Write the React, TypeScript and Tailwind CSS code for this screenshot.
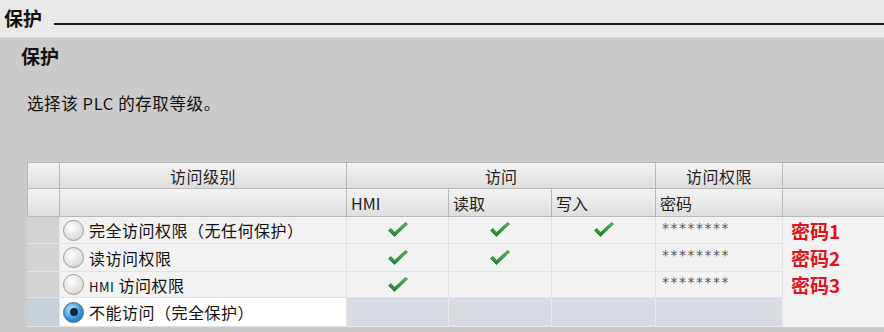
const font = { fontFamily: '"Noto Sans CJK SC", "Noto Sans", sans-serif' };

function Check() {
  return (
    <svg width="22" height="18" viewBox="0 0 22 18">
      <defs>
        <linearGradient id="g" x1="0" y1="0" x2="0" y2="1">
          <stop offset="0" stopColor="#5cc05a" />
          <stop offset="1" stopColor="#17802a" />
        </linearGradient>
      </defs>
      <path
        d="M1.5 9.5 L7.5 15.5 L20.5 3 L18.5 1.5 L7.6 11.5 L4 7.5 Z"
        fill="url(#g)"
        stroke="#1a6e25"
        strokeWidth="0.7"
        strokeLinejoin="round"
      />
    </svg>
  );
}

function Radio({ checked }: { checked?: boolean }) {
  if (checked) {
    return (
      <span className="flex h-[21px] w-[21px] shrink-0 items-center justify-center rounded-full border border-[#3b6f9a] bg-[radial-gradient(circle_at_40%_35%,#c6e8fb,#2f8fd0_60%,#1b5f93)]">
        <span className="h-[8px] w-[8px] rounded-full bg-[#0b2a44]" />
      </span>
    );
  }
  return (
    <span className="h-[21px] w-[21px] shrink-0 rounded-full border border-[#9a9a9a] bg-[radial-gradient(circle_at_40%_35%,#ffffff,#dcdcdc_70%,#bdbdbd)]" />
  );
}

const rows = [
  { label: "完全访问权限（无任何保护）", hmi: true, read: true, write: true, note: "密码1" },
  { label: "读访问权限", hmi: true, read: true, write: false, note: "密码2" },
  { label: "HMI 访问权限", hmi: true, read: false, write: false, note: "密码3" },
];

export default function App() {
  const head = "bg-[linear-gradient(#f3f3f3,#dedede)] border-r border-b border-[#b8b8b8] text-[16px] text-[#222]";
  const cell = "border-r border-b border-[#e2e2e2] bg-[#f2f2f2] flex items-center justify-center";
  return (
    <div className="h-[332px] w-[884px] overflow-hidden bg-[#cbcbcb]" style={font}>
      <div className="flex h-[38px] items-center gap-[12px] border-b border-[#dadada] bg-[#e9e9e9] pl-[4px]">
        <span className="text-[19px] font-bold text-[#111]">保护</span>
        <div className="mt-[10px] h-[2px] flex-1 bg-[#1a1a1a]" />
      </div>
      <div className="pl-[21px] pt-[4px] text-[19px] font-bold text-[#111]">保护</div>
      <div className="pl-[27px] pt-[20px] text-[16.5px] tracking-[0.6px] text-[#111]">选择该 PLC 的存取等级。</div>

      <div className="ml-[27px] mt-[47px] grid grid-cols-[33px_287px_102px_103px_104px_127px_1fr] grid-rows-[26px_28px_27px_28px_26px_29px] border-t border-[#b8b8b8]">
        <div className={`${head} border-l`} />
        <div className={`${head} flex items-center justify-center tracking-[0.5px]`}>访问级别</div>
        <div className={`${head} col-span-3 flex items-center justify-center`}>访问</div>
        <div className={`${head} flex items-center justify-center tracking-[0.5px]`}>访问权限</div>
        <div className="border-b border-[#b8b8b8] bg-[linear-gradient(#f0f0f0,#dcdcdc)]" />

        <div className={`${head} border-l`} />
        <div className={head} />
        <div className={`${head} flex items-center pl-[4px] text-[14px]`}>HMI</div>
        <div className={`${head} flex items-center pl-[4px]`}>读取</div>
        <div className={`${head} flex items-center pl-[4px]`}>写入</div>
        <div className={`${head} flex items-center pl-[4px]`}>密码</div>
        <div className="border-b border-[#b8b8b8] bg-[linear-gradient(#f0f0f0,#dcdcdc)]" />

        {rows.map((r) => (
          <div key={r.note} className="contents">
            <div className="border-b border-r border-[#e4e4e4] bg-[#d3d3d3]" />
            <div className="flex items-center gap-[5px] border-b border-r border-[#e2e2e2] bg-[#f2f2f2] pl-[3px] text-[16px] tracking-[0.5px] text-[#111]">
              <Radio />
              {r.label.startsWith("HMI") ? (
                <span>
                  <span className="text-[13px]">HMI</span> 访问权限
                </span>
              ) : (
                <span>{r.label}</span>
              )}
            </div>
            <div className={cell}>{r.hmi && <Check />}</div>
            <div className={cell}>{r.read && <Check />}</div>
            <div className={cell}>{r.write && <Check />}</div>
            <div className="flex items-center border-b border-r border-[#e2e2e2] bg-[#f2f2f2] pb-[4px] pl-[6px] text-[14px] tracking-[1.5px] text-[#555]" style={{ fontFamily: '"DejaVu Sans", sans-serif' }}>
              ********
            </div>
            <div className="flex items-center bg-[#f2f2f2] pl-[8px] text-[19px] font-bold leading-[20px] text-[#e0141b]">
              {r.note}
            </div>
          </div>
        ))}

        <div className="border-b border-r border-[#e4e4e4] bg-[#c8d0d8]" />
        <div className="flex items-center gap-[5px] border-b border-r border-[#e2e2e2] bg-white pl-[3px] text-[16px] tracking-[0.5px] text-[#111]">
          <Radio checked />
          <span>不能访问（完全保护）</span>
        </div>
        <div className="border-b border-r border-[#eaeaea] bg-[#d6dce2]" />
        <div className="border-b border-r border-[#eaeaea] bg-[#d6dce2]" />
        <div className="border-b border-r border-[#eaeaea] bg-[#d6dce2]" />
        <div className="border-b border-r border-[#eaeaea] bg-[#d6dce2]" />
        <div className="bg-[#f2f2f2]" />

        <div className="col-span-6 bg-[#ececec]" />
        <div className="bg-[#f2f2f2]" />
      </div>
    </div>
  );
}
